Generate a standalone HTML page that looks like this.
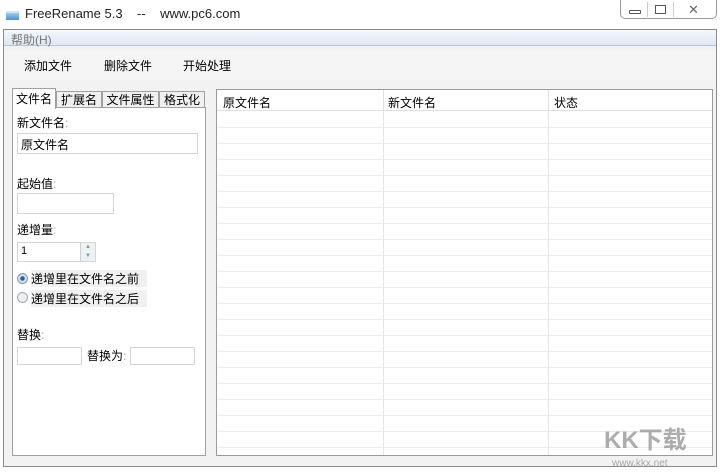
<!DOCTYPE html>
<html><head><meta charset="utf-8"><style>
*{margin:0;padding:0;box-sizing:border-box}
body{width:720px;height:474px;background:#fff;font-family:"Liberation Sans","Noto Sans CJK SC",sans-serif;font-size:12px;color:#000;position:relative;overflow:hidden}
.a{position:absolute}
.t{white-space:nowrap}
.inp{position:absolute;background:#fff;border:1px solid #d5d5d5}
</style></head><body>
<!-- title -->
<div class="a" style="left:6px;top:11px;width:13px;height:9px;background:linear-gradient(#9ccbe8,#4d93c8);border-top:2px solid #cfe6f5"></div>
<div class="a t" style="left:25px;top:6px;font-size:13px;color:#222">FreeRename 5.3&nbsp;&nbsp;&nbsp; --&nbsp;&nbsp;&nbsp; www.pc6.com</div>
<div class="a" style="left:620px;top:0;width:97px;height:19px;border:1px solid #9a9a9a;border-top:none;border-radius:0 0 5px 5px;background:#fff"></div>
<div class="a" style="left:647px;top:2px;width:1px;height:15px;background:#ccc"></div>
<div class="a" style="left:673px;top:2px;width:1px;height:15px;background:#ccc"></div>
<div class="a" style="left:629px;top:10px;width:12px;height:4px;border:1px solid #555;border-radius:1px"></div>
<div class="a" style="left:655px;top:5px;width:11px;height:9px;border:1px solid #555"></div>
<div class="a t" style="left:688px;top:2px;font-size:13px;color:#666">✕</div>
<!-- window frame -->
<div class="a" style="left:3px;top:29px;width:714px;height:438px;background:#f2f2f2;border:1px solid #8a8a8a"></div>
<div class="a" style="left:4px;top:30px;width:712px;height:16px;background:linear-gradient(#f4f7fc,#dfe7f3);border-bottom:1px solid #b8c4d6"></div>
<div class="a t" style="left:11px;top:31px;color:#777">帮助(H)</div>
<div class="a" style="left:4px;top:50px;width:712px;height:30px;background:#f5f5f5"></div>
<div class="a t" style="left:24px;top:57px">添加文件</div>
<div class="a t" style="left:104px;top:57px">删除文件</div>
<div class="a t" style="left:183px;top:57px">开始处理</div>
<!-- tabs -->
<div class="a" style="left:12px;top:107px;width:194px;height:349px;background:#fff;border:1px solid #a0a0a0"></div>
<div class="a t" style="left:56px;top:91px;width:46px;height:17px;border:1px solid #a0a0a0;background:#f0f0f0;text-align:center;line-height:16px">扩展名</div>
<div class="a t" style="left:102px;top:91px;width:57px;height:17px;border:1px solid #a0a0a0;background:#f0f0f0;text-align:center;line-height:16px">文件属性</div>
<div class="a t" style="left:159px;top:91px;width:46px;height:17px;border:1px solid #a0a0a0;background:#f0f0f0;text-align:center;line-height:16px">格式化</div>
<div class="a t" style="left:12px;top:88px;width:44px;height:21px;border:1px solid #a0a0a0;border-bottom:none;background:#fff;text-align:center;line-height:20px">文件名</div>
<div class="a t" style="left:17px;top:114px">新文件名<span style="color:#aaa">:</span></div>
<div class="inp t" style="left:17px;top:133px;width:181px;height:21px;padding:2px 3px">原文件名</div>
<div class="a t" style="left:17px;top:175px">起始值<span style="color:#aaa">:</span></div>
<div class="inp" style="left:17px;top:193px;width:97px;height:21px"></div>
<div class="a t" style="left:17px;top:221px">递增量<span style="color:#aaa">:</span></div>
<div class="inp t" style="left:17px;top:242px;width:79px;height:20px;padding:2px 3px;font-size:11px">1</div>
<div class="a" style="left:80px;top:243px;width:15px;height:18px;background:#eef0f3;border-left:1px solid #ccc;font-size:6px;color:#6a8;text-align:center;line-height:9px">▲<br>▼</div>
<div class="a" style="left:17px;top:273px;width:11px;height:11px;border-radius:50%;border:1px solid #8a9ab0;background:radial-gradient(#2a5ea8 30%,#cfe0f2 40%)"></div>
<div class="a t" style="left:31px;top:270px;background:#f0f0f0;padding-right:8px">递增里在文件名之前</div>
<div class="a" style="left:17px;top:292px;width:11px;height:11px;border-radius:50%;border:1px solid #a0a8b0;background:#eee"></div>
<div class="a t" style="left:31px;top:290px;background:#f0f0f0;padding-right:8px">递增里在文件名之后</div>
<div class="a t" style="left:17px;top:326px">替换<span style="color:#aaa">:</span></div>
<div class="inp" style="left:17px;top:347px;width:65px;height:18px"></div>
<div class="a t" style="left:87px;top:347px">替换为<span style="color:#aaa">:</span></div>
<div class="inp" style="left:130px;top:347px;width:65px;height:18px"></div>
<!-- list view -->
<div class="a" style="left:216px;top:89px;width:497px;height:367px;background:#fff;border:1px solid #9a9a9a;
background-image:linear-gradient(90deg,transparent 166px,#e6e6e6 166px,#e6e6e6 167px,transparent 167px,transparent 331px,#e6e6e6 331px,#e6e6e6 332px,transparent 332px),repeating-linear-gradient(transparent 0,transparent 15px,#ececec 15px,#ececec 16px);background-position:0 0,0 22px"></div>
<div class="a" style="left:217px;top:90px;width:495px;height:21px;background:#fff;border-bottom:1px solid #e0e0e0"></div>
<div class="a" style="left:383px;top:90px;width:1px;height:21px;background:#e0e0e0"></div>
<div class="a" style="left:548px;top:90px;width:1px;height:21px;background:#e0e0e0"></div>
<div class="a t" style="left:223px;top:94px">原文件名</div>
<div class="a t" style="left:388px;top:94px">新文件名</div>
<div class="a t" style="left:554px;top:94px">状态</div>
<div class="a t" style="left:604px;top:420px;font-size:24px;font-weight:bold;color:#999;opacity:.8">KK下载</div>
<div class="a t" style="left:612px;top:458px;font-size:10px;color:#aaa">www.kkx.net</div>
</body></html>
